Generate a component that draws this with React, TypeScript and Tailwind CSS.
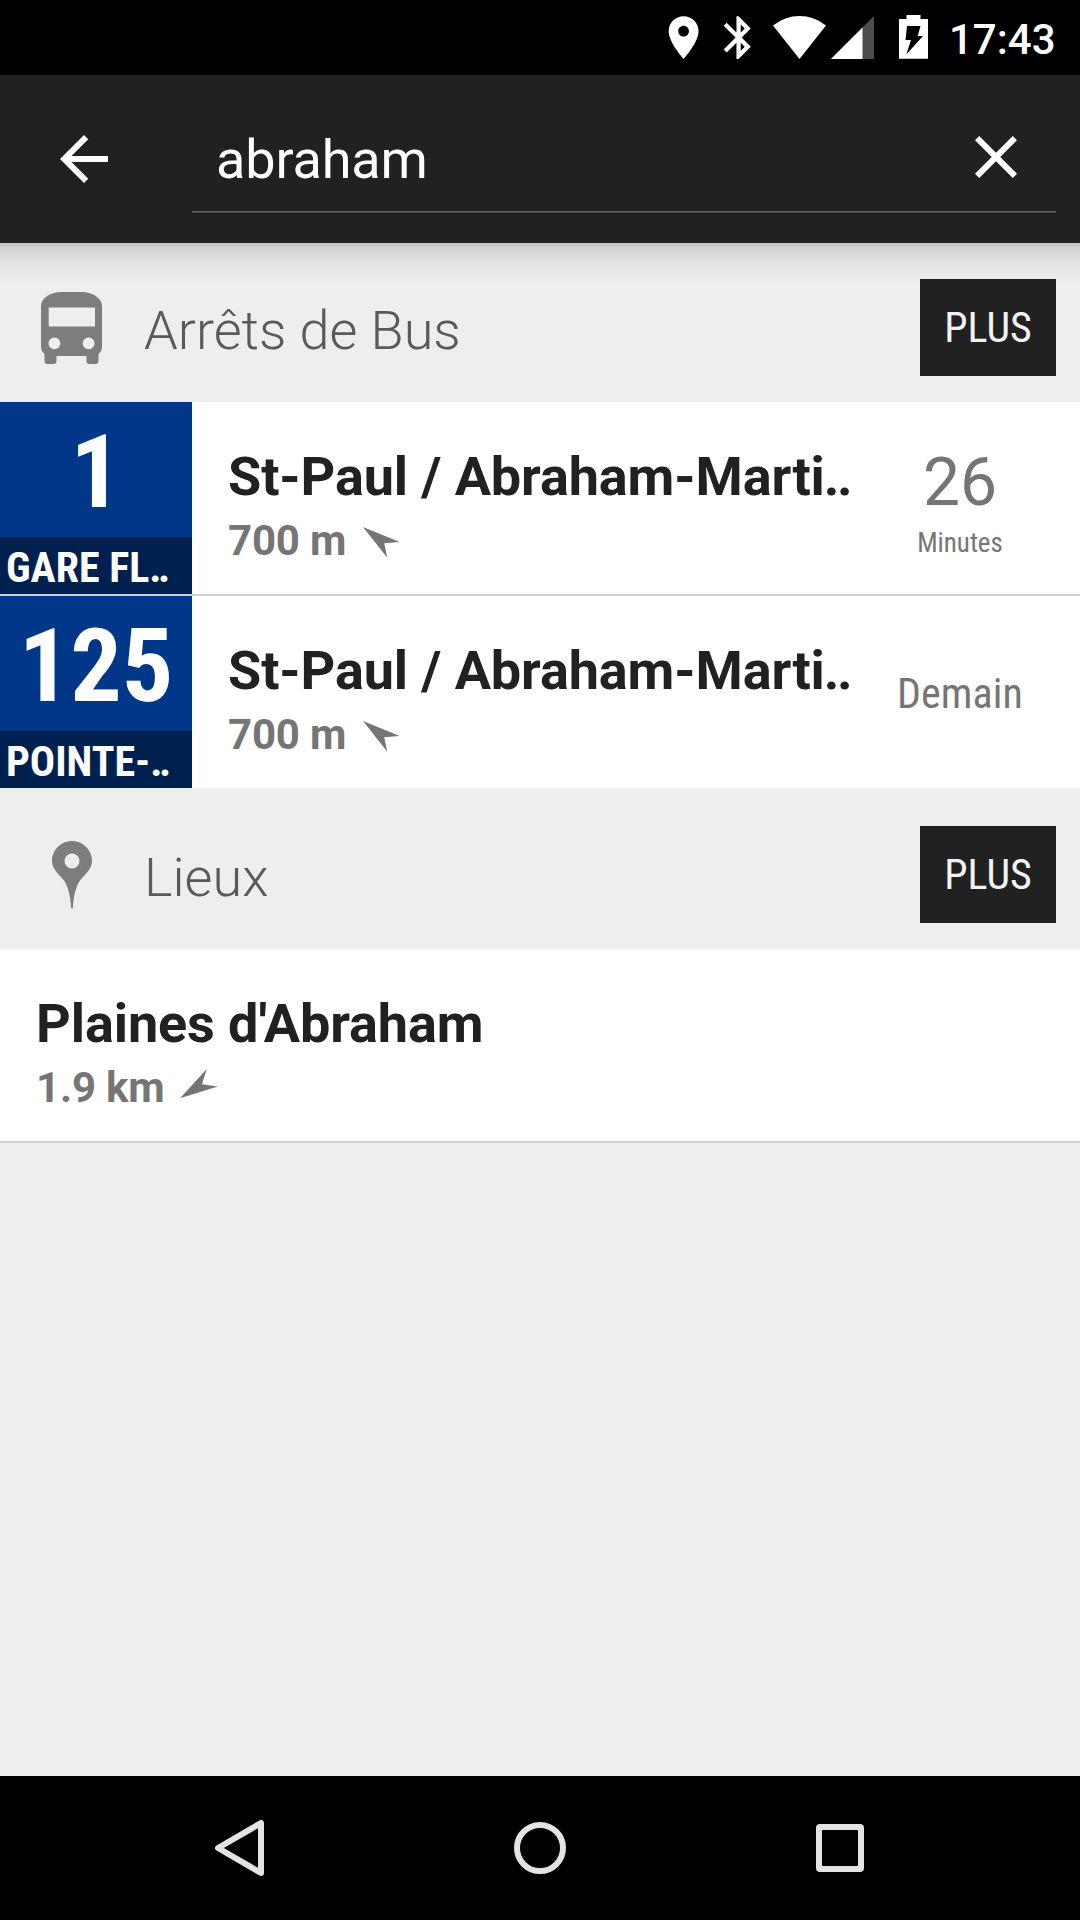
import type { ReactNode } from 'react';

const CONDENSED = "font-['Roboto_Condensed','Roboto',sans-serif] [font-stretch:75%]";

function StatusBar() {
  return (
    <div className="flex h-[75px] shrink-0 items-start bg-black text-white">
      <svg className="ml-[658px] mt-[11.5px] h-[51.2px] w-[51.2px] shrink-0" viewBox="0 0 24 24" fill="currentColor">
        <path d="M12 2C8.13 2 5 5.13 5 9c0 5.25 7 13 7 13s7-7.75 7-13c0-3.87-3.13-7-7-7zm0 9.5c-1.38 0-2.5-1.12-2.5-2.5s1.12-2.5 2.5-2.5 2.5 1.12 2.5 2.5-1.12 2.5-2.5 2.5z" />
      </svg>
      <svg className="ml-[3.6px] mt-[11.7px] h-[51.2px] w-[51.2px] shrink-0" viewBox="0 0 24 24" fill="currentColor">
        <path d="M17.71 7.71L12 2h-1v7.59L6.41 5 5 6.41 10.59 12 5 17.59 6.41 19 11 14.41V22h1l5.71-5.71-4.3-4.29 4.3-4.29zM13 5.83l1.88 1.88L13 9.59V5.83zm1.88 10.46L13 18.17v-3.76l1.88 1.88z" />
      </svg>
      <svg className="ml-[9px] h-[75px] w-[53px] shrink-0" viewBox="773 0 53 75" fill="currentColor">
        <path d="M773 25.5A41.7 41.7 0 0 1 826 25.5L799.5 59Z" />
      </svg>
      <svg className="ml-[5px] h-[75px] w-[43px] shrink-0" viewBox="831 0 43 75">
        <path d="M831 59L874 16V59Z" fill="#4d4d4d" />
        <path d="M831 59L862.5 27.5V59Z" fill="#fff" />
      </svg>
      <svg className="ml-[25px] h-[75px] w-[29px] shrink-0" viewBox="899 0 29 75">
        <path d="M899 19H906.5V15H920.5V19H928V58.7H899Z" fill="#fff" />
        <path d="M907 26H920.5L917.7 36H923L906.3 54.5L911 40H905.5Z" fill="#000" />
      </svg>
      <div className="ml-[21px] mt-[15px] text-[42px] font-medium leading-[50px]">17:43</div>
    </div>
  );
}

function SearchBar() {
  return (
    <div className="flex h-[168px] shrink-0 bg-[#212121] pl-12 pr-6 text-white">
      <svg className="mt-12 h-[72px] w-[72px]" viewBox="0 0 24 24" fill="currentColor">
        <path d="M20 11H7.83l5.59-5.59L12 4l-8 8 8 8 1.41-1.41L7.83 13H20v-2z" />
      </svg>
      <div className="ml-[72px] flex h-[138px] grow border-b border-[#454545]">
        <div className="flex grow border-b border-[#636363] pl-6">
          <div className="mt-[53px] grow text-[54px] leading-[64px] tracking-[-0.15px]">abraham</div>
          <svg className="mr-6 mt-[46px] h-[72px] w-[72px]" viewBox="0 0 24 24" fill="currentColor">
            <path d="M19 6.41L17.59 5 12 10.59 6.41 5 5 6.41 10.59 12 5 17.59 6.41 19 12 13.41 17.59 19 19 17.59 13.41 12z" />
          </svg>
        </div>
      </div>
    </div>
  );
}

function BusIcon() {
  return (
    <svg className="mr-px h-[72px] w-[61px]" viewBox="0 0 61 72" fill="#7d7d7d">
      <path
        fillRule="evenodd"
        d="M0 14C0 7 8 0 21 0H40C53 0 61 7 61 14V55C61 58.5 59.5 60 57.5 62V69Q57.5 72 54.5 72H48.5Q45.5 72 45.5 69V64H15.5V69Q15.5 72 12.5 72H6.5Q3.5 72 3.5 69V62C1.5 60 0 58.5 0 55ZM7.7 15.5V34.5H54V15.5ZM13.4 45.5a5.9 5.9 0 1 0 .01 0ZM47.6 45.5a5.9 5.9 0 1 0 .01 0Z"
      />
    </svg>
  );
}

function PlaceIcon() {
  return (
    <svg className="mt-[2px] h-[68px] w-[40px]" viewBox="0 0 40 68" fill="#7d7d7d">
      <path
        fillRule="evenodd"
        d="M20 0C9 0 0 9 0 20C0 27.5 6.5 33 12 39.5C15.5 44.5 18.5 54 19.2 67.6H20.8C21.5 54 24.5 44.5 28 39.5C33.5 33 40 27.5 40 20C40 9 31 0 20 0ZM20 12.4a7.5 7.5 0 1 0 .01 0Z"
      />
    </svg>
  );
}

function SectionHeader({ icon, title }: { icon: ReactNode; title: string }) {
  return (
    <div className="flex h-[161px] shrink-0 items-start pr-6">
      <div className="flex w-36 justify-center pt-[51px]">{icon}</div>
      <div className="mt-[58px] grow text-[54px] font-light leading-[64px] text-[#5a5a5a]">{title}</div>
      <div className={`${CONDENSED} mt-[38px] flex h-[97px] w-[136px] justify-center bg-[#212121] pt-[24px] text-[42px] leading-[50px] text-[#f2f2f2]`}>
        PLUS
      </div>
    </div>
  );
}

function Info({ title, clipped, distance, children }: { title: string; clipped?: boolean; distance: string; children: ReactNode }) {
  return (
    <div className="grow">
      <div className="mt-[43px] whitespace-nowrap text-[54px] font-bold leading-[64px] tracking-[-0.1px] text-[#212121]">
        {title}
        {clipped && <span className="-ml-px tracking-[-2.5px]">..</span>}
      </div>
      <div className="mt-[7px] flex text-[42px] font-bold leading-[50px] tracking-[-0.2px] text-[#757575]">
        {distance}
        {children}
      </div>
    </div>
  );
}

function StopRow({ line, direction, children }: { line: string; direction: string; children: ReactNode }) {
  return (
    <div className="flex h-[192px] shrink-0 bg-white">
      <div className={`${CONDENSED} w-48 shrink-0 bg-[#003788] font-bold text-white`}>
        <div className="h-[135px] pt-[10px] text-center text-[102px] leading-[120px]">{line}</div>
        <div className="h-[57px] whitespace-nowrap bg-[#00204f] pl-[6px] pt-[6px] text-[42px] leading-[50px]">
          {direction}
          <span className="tracking-[-3.5px]">..</span>
        </div>
      </div>
      <div className="flex w-[648px] shrink-0 pl-9">
        <Info title="St-Paul / Abraham-Marti" clipped distance="700 m">
          <svg className="ml-[17px] mt-[11px] h-[31px] w-[37px]" viewBox="0 0 37 31" fill="#757575">
            <path d="M0 0L36.7 15L21.2 16.3L24.3 30.7Z" />
          </svg>
        </Info>
      </div>
      <div className="flex w-[240px] flex-col items-center text-[#757575]">{children}</div>
    </div>
  );
}

function NavBar() {
  return (
    <div className="flex h-36 shrink-0 items-center bg-black pl-[204px]">
      <svg className="h-[60px] w-[672px]" viewBox="204 1818 672 60" fill="none" stroke="#e4e4e4" strokeWidth="6" strokeLinejoin="round">
        <path d="M218 1848L261 1823V1873Z" />
        <circle cx="540" cy="1848" r="23" />
        <rect x="819" y="1827" width="42" height="42" rx="1" />
      </svg>
    </div>
  );
}

export default function App() {
  return (
    <div className="flex h-[1920px] w-[1080px] flex-col overflow-hidden bg-[#eee] font-['Roboto',sans-serif]">
      <StatusBar />
      <SearchBar />
      <div className="relative flex grow flex-col">
        <div className="absolute inset-x-0 top-0 h-10 border-t-[3px] border-[#c5c5c5] bg-linear-to-b from-[#d0d0d0] via-[#e3e3e3] via-45% to-[#eee]" />
        <div className="relative -mt-[2px] flex flex-col">
          <SectionHeader icon={<BusIcon />} title="Arrêts de Bus" />
          <StopRow line="1" direction="GARE FL">
            <div className="mt-[42px] text-[66px] leading-[78px]">26</div>
            <div className={`${CONDENSED} mt-[5px] text-[27px] leading-[32px]`}>Minutes</div>
          </StopRow>
          <div className="h-[2px] shrink-0 bg-[#d0d0d0]" />
          <StopRow line="125" direction="POINTE-">
            <div className={`${CONDENSED} mt-[73px] text-[42px] leading-[50px] tracking-[0.1px]`}>Demain</div>
          </StopRow>
          <SectionHeader icon={<PlaceIcon />} title="Lieux" />
          <div className="flex h-[194px] shrink-0 border-b-2 border-[#d0d0d0] bg-white pl-9">
            <Info title="Plaines d'Abraham" distance="1.9 km">
              <svg className="ml-[16px] mt-[6px] h-[30px] w-[38px]" viewBox="0 0 38 30" fill="#757575">
                <path d="M0 29.3L26.8 0L22 15.3L37.8 17.6Z" />
              </svg>
            </Info>
          </div>
        </div>
      </div>
      <NavBar />
    </div>
  );
}
